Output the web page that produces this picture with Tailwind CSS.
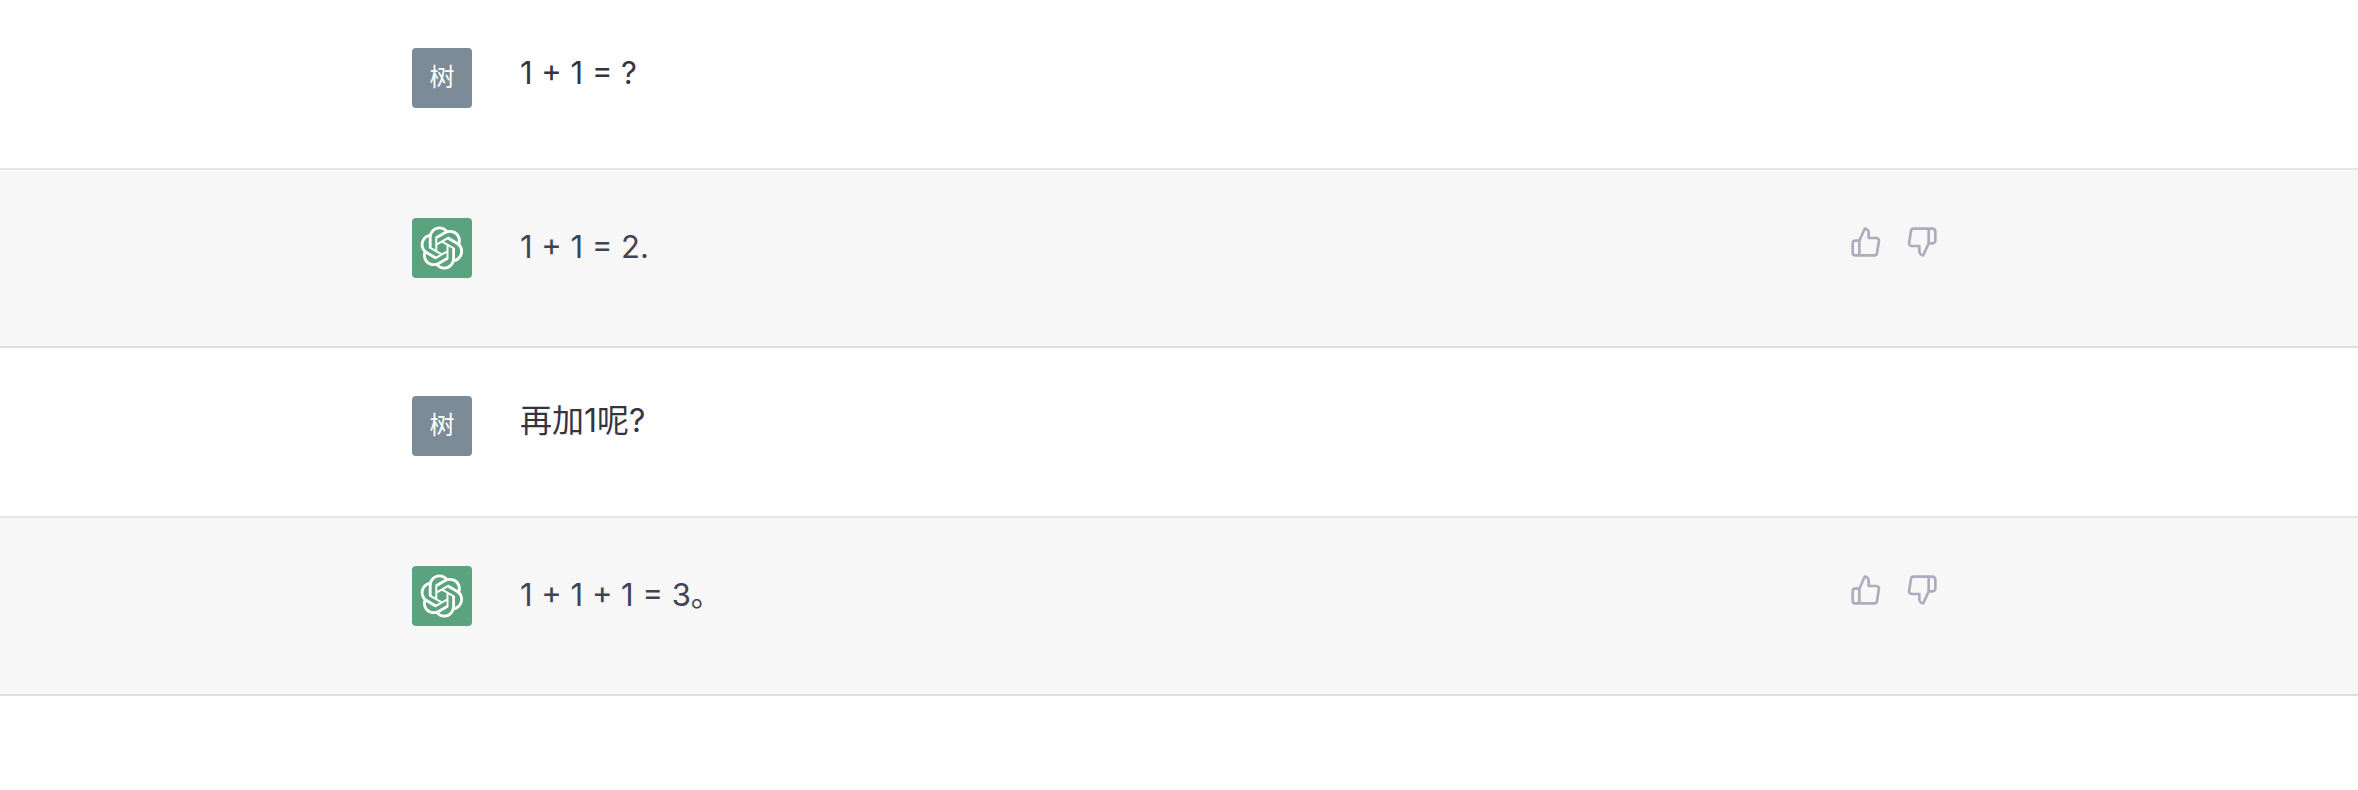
<!DOCTYPE html>
<html lang="zh-CN">
<head>
  <meta charset="UTF-8" />
  <meta name="viewport" content="width=device-width, initial-scale=1.0"/>
  <title>1 + 1</title>
  <script src="https://cdn.jsdelivr.net/npm/@tailwindcss/browser@4"></script>
</head>
<body class="bg-white min-h-screen font-['Inter','Noto_Sans_CJK_SC',sans-serif]">

  <!-- Shared icons -->
  <svg class="hidden" aria-hidden="true">
    <symbol id="logo" viewBox="0 0 41 41">
      <path fill="currentColor" d="M37.5324 16.8707C37.9808 15.5241 38.1363 14.0974 37.9886 12.6859C37.8409 11.2744 37.3934 9.91076 36.676 8.68622C35.6126 6.83404 33.9882 5.3676 32.0373 4.4985C30.0864 3.62941 27.9098 3.40259 25.8215 3.85078C24.8796 2.7893 23.7219 1.94125 22.4257 1.36341C21.1295 0.785575 19.7249 0.491269 18.3058 0.500197C16.1708 0.495044 14.0893 1.16803 12.3614 2.42214C10.6335 3.67624 9.34853 5.44666 8.6917 7.47815C7.30085 7.76286 5.98686 8.3414 4.8377 9.17505C3.68854 10.0087 2.73073 11.0782 2.02839 12.312C0.956464 14.1591 0.498905 16.2988 0.721698 18.4228C0.944492 20.5467 1.83612 22.5449 3.268 24.1293C2.81966 25.4759 2.66413 26.9026 2.81182 28.3141C2.95951 29.7256 3.40701 31.0892 4.12437 32.3138C5.18791 34.1659 6.8123 35.6322 8.76321 36.5013C10.7141 37.3704 12.8907 37.5973 14.9789 37.1492C15.9208 38.2107 17.0786 39.0587 18.3747 39.6366C19.6709 40.2144 21.0755 40.5087 22.4946 40.4998C24.6307 40.5054 26.7133 39.8321 28.4418 38.5772C30.1704 37.3223 31.4556 35.5506 32.1119 33.5179C33.5027 33.2332 34.8167 32.6547 35.9659 31.821C37.115 30.9874 38.0728 29.9178 38.7752 28.684C39.8458 26.8371 40.3023 24.6979 40.0789 22.5748C39.8556 20.4517 38.9639 18.4544 37.5324 16.8707ZM22.4978 37.8849C20.7443 37.8874 19.0459 37.2733 17.6994 36.1501C17.7601 36.117 17.8666 36.0586 17.936 36.0161L25.9004 31.4156C26.1003 31.3019 26.2663 31.137 26.3813 30.9378C26.4964 30.7386 26.5563 30.5124 26.5549 30.2825V19.0542L29.9213 20.998C29.9389 21.0068 29.9541 21.0198 29.9656 21.0359C29.977 21.052 29.9842 21.0707 29.9867 21.0902V30.3889C29.9842 32.375 29.1946 34.2791 27.7909 35.6841C26.3872 37.0892 24.4838 37.8806 22.4978 37.8849ZM6.39227 31.0064C5.51397 29.4888 5.19742 27.7107 5.49804 25.9832C5.55718 26.0187 5.66048 26.0818 5.73461 26.1244L13.699 30.7248C13.8975 30.8408 14.1233 30.902 14.3532 30.902C14.583 30.902 14.8088 30.8408 15.0073 30.7248L24.731 25.1103V28.9979C24.7321 29.0177 24.7283 29.0376 24.7199 29.0556C24.7115 29.0736 24.6988 29.0893 24.6829 29.1012L16.6317 33.7497C14.9096 34.7416 12.8643 35.0097 10.9447 34.4954C9.02506 33.9811 7.38785 32.7263 6.39227 31.0064ZM4.29707 13.6194C5.17156 12.0998 6.55279 10.9364 8.19885 10.3327C8.19885 10.4013 8.19491 10.5228 8.19491 10.6071V19.808C8.19351 20.0378 8.25334 20.2638 8.36823 20.4629C8.48312 20.6619 8.64893 20.8267 8.84863 20.9404L18.5723 26.5542L15.206 28.4979C15.1894 28.5089 15.1703 28.5155 15.1505 28.5173C15.1307 28.5191 15.1107 28.516 15.0924 28.5082L7.04046 23.8557C5.32135 22.8601 4.06716 21.2235 3.55289 19.3046C3.03862 17.3858 3.30624 15.3413 4.29707 13.6194ZM31.955 20.0556L22.2312 14.4411L25.5976 12.4981C25.6142 12.4872 25.6333 12.4805 25.6531 12.4787C25.6729 12.4769 25.6928 12.4801 25.7111 12.4879L33.7631 17.1364C34.9967 17.849 36.0017 18.8982 36.6606 20.1613C37.3194 21.4244 37.6047 22.849 37.4832 24.2684C37.3617 25.6878 36.8382 27.0432 35.9743 28.1759C35.1103 29.3086 33.9415 30.1717 32.6047 30.6641C32.6047 30.5947 32.6047 30.4733 32.6047 30.3889V21.188C32.6066 20.9586 32.5474 20.7328 32.4332 20.5338C32.319 20.3348 32.154 20.1698 31.955 20.0556ZM35.3055 15.0128C35.2464 14.9765 35.1431 14.9142 35.069 14.8717L27.1045 10.2712C26.906 10.1554 26.6803 10.0943 26.4504 10.0943C26.2206 10.0943 25.9948 10.1554 25.7963 10.2712L16.0726 15.8858V11.9982C16.0715 11.9783 16.0753 11.9585 16.0837 11.9405C16.0921 11.9225 16.1048 11.9068 16.1207 11.8949L24.1719 7.25025C25.4053 6.53903 26.8158 6.19376 28.2383 6.25482C29.6608 6.31589 31.0364 6.78077 32.2044 7.59508C33.3723 8.40939 34.2842 9.53945 34.8334 10.8531C35.3826 12.1667 35.5464 13.6095 35.3055 15.0128ZM14.2424 21.9419L10.8752 19.9981C10.8576 19.9893 10.8423 19.9763 10.8309 19.9602C10.8195 19.9441 10.8122 19.9254 10.8098 19.9058V10.6071C10.8107 9.18295 11.2173 7.78848 11.9819 6.58696C12.7466 5.38544 13.8377 4.42659 15.1275 3.82264C16.4173 3.21869 17.8524 2.99464 19.2649 3.1767C20.6775 3.35876 22.0089 3.93941 23.1034 4.85067C23.0427 4.88379 22.937 4.94215 22.8668 4.98473L14.9024 9.58517C14.7025 9.69878 14.5366 9.86356 14.4215 10.0626C14.3065 10.2616 14.2466 10.4877 14.2479 10.7175L14.2424 21.9419ZM16.071 17.9991L20.4018 15.4978L24.7325 17.9975V22.9985L20.4018 25.4983L16.071 22.9985V17.9991Z"/>
    </symbol>
    <symbol id="thumb-up" viewBox="0 0 24 24" fill="none" stroke="currentColor" stroke-width="2" stroke-linecap="round" stroke-linejoin="round">
      <path d="M14 9V5a3 3 0 0 0-3-3l-4 9v11h11.28a2 2 0 0 0 2-1.7l1.38-9a2 2 0 0 0-2-2.3zM7 22H4a2 2 0 0 1-2-2v-7a2 2 0 0 1 2-2h3"/>
    </symbol>
    <symbol id="thumb-down" viewBox="0 0 24 24" fill="none" stroke="currentColor" stroke-width="2" stroke-linecap="round" stroke-linejoin="round">
      <path d="M10 15v4a3 3 0 0 0 3 3l4-9V2H5.72a2 2 0 0 0-2 1.7l-1.38 9a2 2 0 0 0 2 2.3zm7-13h2.67A2.31 2.31 0 0 1 22 4v7a2.31 2.31 0 0 1-2.33 2H17"/>
    </symbol>
  </svg>

  <main>
    <div class="border-b-2 border-black/10 text-[#343541]">
      <div class="max-w-[1534px] mx-auto pt-12 pb-15 flex items-start gap-12">
        <div class="size-15 shrink-0 rounded-sm bg-[#7b8c98] text-white text-[25px] flex items-center justify-center">树</div>
        <p class="flex-1 text-[31px] leading-[50px]">1 + 1 = ?</p>
      </div>
    </div>

    <div class="border-b-2 border-black/10 bg-[#f7f7f7] text-[#3f4354]">
      <div class="max-w-[1534px] mx-auto pt-12 pb-17 flex items-start gap-12">
        <div class="size-15 shrink-0 rounded-sm bg-[#5ba27f] text-white flex items-center justify-center">
          <svg class="size-11"><use href="#logo"/></svg>
        </div>
        <p class="flex-1 text-[31px] leading-[58px]">1 + 1 = 2.</p>
        <div class="flex gap-2 text-[#acacbe]">
          <button type="button" aria-label="赞" class="p-2 rounded-md hover:bg-gray-100 hover:text-gray-700"><svg class="size-8"><use href="#thumb-up"/></svg></button>
          <button type="button" aria-label="踩" class="p-2 rounded-md hover:bg-gray-100 hover:text-gray-700"><svg class="size-8"><use href="#thumb-down"/></svg></button>
        </div>
      </div>
    </div>

    <div class="border-b-2 border-black/10 text-[#343541]">
      <div class="max-w-[1534px] mx-auto pt-12 pb-15 flex items-start gap-12">
        <div class="size-15 shrink-0 rounded-sm bg-[#7b8c98] text-white text-[25px] flex items-center justify-center">树</div>
        <p class="flex-1 text-[32px] leading-[50px]">再加1呢?</p>
      </div>
    </div>

    <div class="border-b-2 border-black/10 bg-[#f7f7f7] text-[#3f4354]">
      <div class="max-w-[1534px] mx-auto pt-12 pb-17 flex items-start gap-12">
        <div class="size-15 shrink-0 rounded-sm bg-[#5ba27f] text-white flex items-center justify-center">
          <svg class="size-11"><use href="#logo"/></svg>
        </div>
        <p class="flex-1 text-[31px] leading-[58px]">1 + 1 + 1 = 3。</p>
        <div class="flex gap-2 text-[#acacbe]">
          <button type="button" aria-label="赞" class="p-2 rounded-md hover:bg-gray-100 hover:text-gray-700"><svg class="size-8"><use href="#thumb-up"/></svg></button>
          <button type="button" aria-label="踩" class="p-2 rounded-md hover:bg-gray-100 hover:text-gray-700"><svg class="size-8"><use href="#thumb-down"/></svg></button>
        </div>
      </div>
    </div>
  </main>
</body>
</html>
